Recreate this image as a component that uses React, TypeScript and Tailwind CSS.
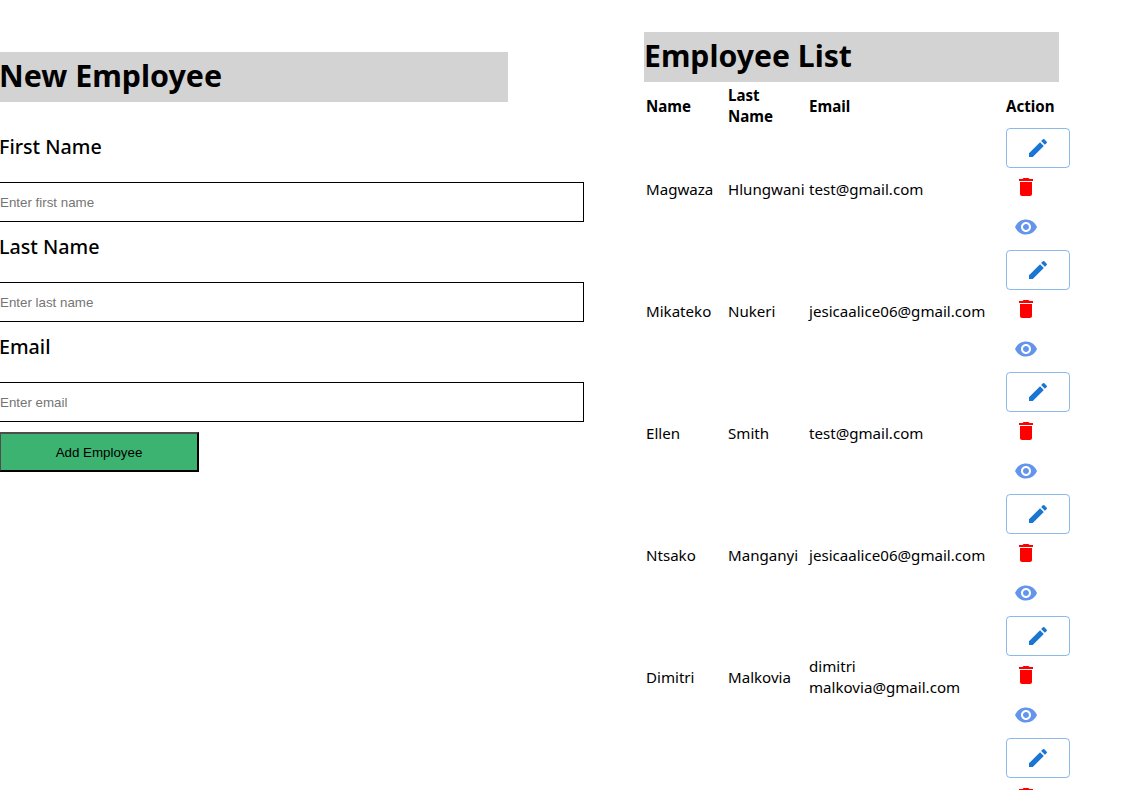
import { MdDelete, MdEdit, MdVisibility } from "react-icons/md";

const employees = [
  { id: 1, first: "Magwaza", last: "Hlungwani", email: "test@gmail.com" },
  { id: 2, first: "Mikateko", last: "Nukeri", email: "jesicaalice06@gmail.com" },
  { id: 3, first: "Ellen", last: "Smith", email: "test@gmail.com" },
  { id: 4, first: "Ntsako", last: "Manganyi", email: "jesicaalice06@gmail.com" },
  { id: 5, first: "Dimitri", last: "Malkovia", email: "dimitri malkovia@gmail.com" },
  { id: 6, first: "", last: "", email: "" },
];

const fields = [
  { label: "First Name", placeholder: "Enter first name" },
  { label: "Last Name", placeholder: "Enter last name" },
  { label: "Email", placeholder: "Enter email" },
];

const App = () => {
  return (
    <div className="flex h-[790px] overflow-hidden bg-white text-black font-['Noto_Sans',sans-serif]">
      <div className="w-[644px] shrink-0 pt-[52px]">
        <h1 className="w-[508px] h-[50px] bg-[#d3d3d3] text-[30.4px] leading-[48px] font-bold -indent-px">New Employee</h1>
        <form className="mt-[20px] -ml-px">
          {fields.map((field) => (
            <div key={field.label} className="flex flex-col h-[100px]">
              <label className="h-[50px] pt-[10px] text-[19.7px] leading-[30px] font-medium">{field.label}</label>
              <input
                placeholder={field.placeholder}
                className="mt-[10px] w-[585px] h-[40px] border border-black text-[13.33px] font-['Liberation_Sans',sans-serif] placeholder:text-[#757575] outline-none"
              />
            </div>
          ))}
          <button
            type="button"
            className="block mt-[10px] w-[200px] h-[40px] pt-px bg-[#3cb371] border-2 border-black border-t-[#4d4d4d] border-l-[#4d4d4d] text-[13.33px] font-['Liberation_Sans',sans-serif]"
          >
            Add Employee
          </button>
        </form>
      </div>

      <div className="pt-[32px]">
        <h1 className="w-[415px] h-[50px] bg-[#d3d3d3] text-[30.2px] leading-[48px] font-bold">Employee List</h1>
        <table className="table-fixed w-[428px] border-separate border-spacing-[2px] text-[15.1px] leading-[21px]">
          <thead>
            <tr className="text-left font-bold">
              <th className="w-[80px] p-0"><div className="translate-y-px">Name</div></th>
              <th className="w-[79px] p-0"><div className="translate-y-px">Last Name</div></th>
              <th className="w-[195px] p-0"><div className="translate-y-px">Email</div></th>
              <th className="w-[64px] p-0"><div className="translate-y-px">Action</div></th>
            </tr>
          </thead>
          <tbody>
            {employees.map((emp) => (
              <tr key={emp.id}>
                <td className="p-0 pt-[2px]">{emp.first}</td>
                <td className="p-0 pt-[2px]">{emp.last}</td>
                <td className="p-0 pt-[2px]">{emp.email}</td>
                <td className="p-0">
                  <div className="flex flex-col items-start h-[120px]">
                    <button className="flex items-center justify-center w-[64px] h-[40px] border border-[#1976d2]/50 rounded text-[#1976d2]">
                      <MdEdit size={24} />
                    </button>
                    <button className="flex items-center justify-center w-[40px] h-[40px] -mt-px text-[#ff0000]">
                      <MdDelete size={24} />
                    </button>
                    <button className="flex items-center justify-center w-[40px] h-[40px] text-[#6495ed]">
                      <MdVisibility size={24} />
                    </button>
                  </div>
                </td>
              </tr>
            ))}
          </tbody>
        </table>
      </div>
    </div>
  );
};

export default App;
